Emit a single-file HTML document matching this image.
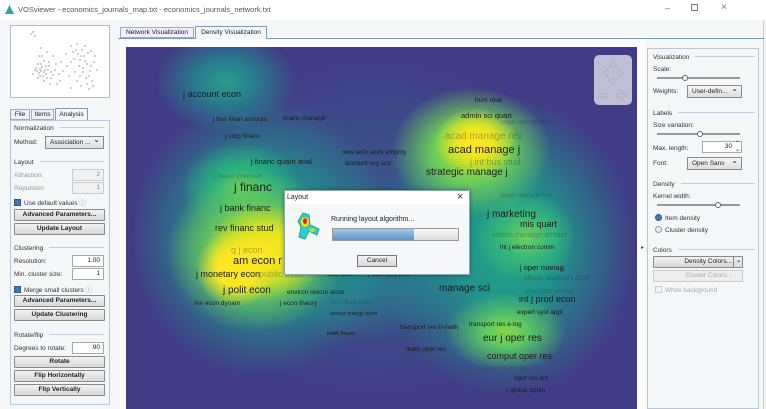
<!DOCTYPE html>
<html><head><meta charset="utf-8">
<style>
*{box-sizing:border-box;margin:0;padding:0}
body{width:766px;height:409px;overflow:hidden;background:#f4f6f8;font-family:"Liberation Sans",sans-serif;font-size:7px;color:#222;position:relative}
.a{position:absolute;white-space:nowrap}
.titlebar{position:absolute;left:0;top:0;width:766px;height:20px;background:#fff}
.box{position:absolute;border:1px solid #b9c9d8;background:#f4f6f8}
.btn{position:absolute;height:12px;border:1px solid #8a8a8a;background:linear-gradient(#f2f2f2,#d8d8d8);font-size:6.5px;text-align:center;line-height:10px;font-weight:bold;color:#222;border-radius:1px}
.inp{position:absolute;height:12px;border:1px solid #a9a9a9;background:#fff;font-size:6.5px;text-align:right;padding-right:3px;line-height:10px}
.inp.dis{background:#f0f0f0;color:#888;border-color:#ccc}
.sec{position:absolute;font-size:6.5px;color:#333;overflow:hidden;white-space:nowrap}
.sec:after{content:"";display:inline-block;margin-left:6px;vertical-align:2px;height:1px;background:#ccd;width:100px}
.lbl{position:absolute;font-size:6.5px;color:#333;white-space:nowrap}
.chk{display:inline-block;width:7px;height:7px;background:#3d7ab8;border:1px solid #2a5a8a;vertical-align:-1px;margin-right:3px}
.combo{position:absolute;height:13px;border:1px solid #8a8a8a;background:linear-gradient(#f5f5f5,#dedede);font-size:6.5px;line-height:11px;padding-left:4px}
.combo:after{content:"\2304";position:absolute;right:3px;top:-3px;font-size:8px}
.slider{position:absolute;height:2px;background:#bbb;border:1px solid #999}
.knob{position:absolute;width:6px;height:6px;border-radius:50%;border:1px solid #666;background:#fff;top:-3px}
#map{position:absolute;left:126px;top:47px;width:511px;height:362px;
background:
radial-gradient(ellipse 40px 38px at 110px 222px,#fde725 0%,#fde725 45%,rgba(253,231,37,0) 100%),
radial-gradient(ellipse 60px 48px at 140px 205px,#fde725 0%,#e8e41b 40%,rgba(200,224,32,0) 100%),
radial-gradient(ellipse 42px 34px at 350px 95px,#fde725 0%,#f0e51f 40%,rgba(220,225,35,0) 100%),
radial-gradient(ellipse 90px 80px at 130px 205px,#a5db36 0%,#7ad151 40%,rgba(94,201,98,0) 100%),
radial-gradient(ellipse 80px 65px at 345px 105px,#b5de2b 0%,#6ece58 45%,rgba(94,201,98,0) 100%),
radial-gradient(ellipse 60px 40px at 380px 285px,#86d549 0%,#5ec962 35%,rgba(60,187,117,0) 100%),
radial-gradient(ellipse 50px 45px at 400px 190px,#6ece58 0%,#35b779 50%,rgba(40,174,128,0) 100%),
radial-gradient(ellipse 60px 45px at 115px 140px,#5ec962 0%,#2ab07f 45%,rgba(33,145,140,0) 100%),
radial-gradient(ellipse 130px 140px at 135px 190px,#22a884 0%,#21918c 40%,rgba(44,114,142,0) 100%),
radial-gradient(ellipse 130px 150px at 380px 200px,#22a884 0%,#21918c 40%,rgba(44,114,142,0) 100%),
radial-gradient(ellipse 70px 50px at 100px 35px,#2a9d8a 0%,#277f8e 40%,rgba(49,104,142,0) 100%),
radial-gradient(ellipse 100px 60px at 230px 235px,#27838e 0%,rgba(49,104,142,0) 100%),
radial-gradient(ellipse 200px 170px at 250px 180px,#355f8d 0%,rgba(65,61,135,0) 100%),
#413c86;}
.t{position:absolute;white-space:nowrap;color:#1d1d1d;line-height:1}
.f{color:rgba(40,40,40,.35)}
</style></head><body>
<div class="titlebar">
 <div class="a" style="left:5px;top:5px;width:9px;height:9px;background:linear-gradient(135deg,#4caf50,#2196f3);clip-path:polygon(50% 0,100% 100%,0 100%)"></div>
 <div class="a" style="left:18px;top:5px;font-size:7.5px;color:#555">VOSviewer - economics_journals_map.txt - economics_journals_network.txt</div>
 <div class="a" style="left:665px;top:3px;font-size:9px;color:#666">&#8211;</div>
 <div class="a" style="left:691px;top:4px;width:7px;height:7px;border:1px solid #777"></div>
 <div class="a" style="left:721px;top:2px;font-size:10px;color:#777">&#215;</div>
</div>
<div class="a" style="left:763px;top:20px;width:1px;height:389px;background:#ccc"></div>

<!-- left -->
<div class="box" style="left:10px;top:25px;width:100px;height:73px;background:#fff;border-color:#a9bfd6">
<svg width="98" height="71" style="position:absolute;left:0;top:0">
<g fill="#555">
<circle cx="20" cy="8" r=".6"/><circle cx="24" cy="10" r=".6"/><circle cx="22" cy="6" r=".6"/><circle cx="30" cy="22" r=".6"/><circle cx="28" cy="30" r=".6"/><circle cx="33" cy="35" r=".6"/><circle cx="25" cy="42" r=".6"/><circle cx="30" cy="45" r=".6"/><circle cx="35" cy="48" r=".6"/><circle cx="38" cy="40" r=".6"/><circle cx="40" cy="52" r=".6"/><circle cx="22" cy="48" r=".6"/><circle cx="44" cy="44" r=".6"/><circle cx="33" cy="55" r=".6"/><circle cx="27" cy="38" r=".6"/><circle cx="42" cy="30" r=".6"/><circle cx="36" cy="26" r=".6"/><circle cx="46" cy="58" r=".6"/><circle cx="50" cy="36" r=".6"/><circle cx="60" cy="20" r=".6"/><circle cx="65" cy="24" r=".6"/><circle cx="70" cy="30" r=".6"/><circle cx="74" cy="20" r=".6"/><circle cx="68" cy="40" r=".6"/><circle cx="72" cy="46" r=".6"/><circle cx="78" cy="50" r=".6"/><circle cx="80" cy="40" r=".6"/><circle cx="84" cy="30" r=".6"/><circle cx="76" cy="58" r=".6"/><circle cx="82" cy="60" r=".6"/><circle cx="66" cy="55" r=".6"/><circle cx="58" cy="50" r=".6"/><circle cx="74" cy="35" r=".6"/><circle cx="63" cy="33" r=".6"/><circle cx="55" cy="28" r=".6"/><circle cx="86" cy="44" r=".6"/><circle cx="31" cy="30" r=".6"/><circle cx="37" cy="44" r=".6"/><circle cx="29" cy="50" r=".6"/><circle cx="77" cy="27" r=".6"/><circle cx="69" cy="50" r=".6"/>
<circle cx="26" cy="45" r=".6"/><circle cx="31" cy="41" r=".6"/><circle cx="34" cy="44" r=".6"/><circle cx="28" cy="47" r=".6"/><circle cx="32" cy="50" r=".6"/><circle cx="36" cy="52" r=".6"/><circle cx="24" cy="44" r=".6"/><circle cx="38" cy="36" r=".6"/><circle cx="40" cy="46" r=".6"/><circle cx="30" cy="38" r=".6"/><circle cx="27" cy="52" r=".6"/><circle cx="35" cy="40" r=".6"/><circle cx="33" cy="46" r=".6"/><circle cx="29" cy="43" r=".6"/><circle cx="42" cy="49" r=".6"/><circle cx="45" cy="38" r=".6"/><circle cx="48" cy="48" r=".6"/><circle cx="52" cy="45" r=".6"/><circle cx="56" cy="40" r=".6"/><circle cx="62" cy="26" r=".6"/><circle cx="67" cy="28" r=".6"/><circle cx="71" cy="24" r=".6"/><circle cx="73" cy="30" r=".6"/><circle cx="69" cy="34" r=".6"/><circle cx="76" cy="38" r=".6"/><circle cx="72" cy="42" r=".6"/><circle cx="79" cy="45" r=".6"/><circle cx="75" cy="52" r=".6"/><circle cx="81" cy="55" r=".6"/><circle cx="78" cy="63" r=".6"/><circle cx="70" cy="60" r=".6"/><circle cx="64" cy="46" r=".6"/><circle cx="60" cy="36" r=".6"/><circle cx="66" cy="18" r=".6"/><circle cx="80" cy="25" r=".6"/><circle cx="83" cy="36" r=".6"/><circle cx="49" cy="55" r=".6"/><circle cx="39" cy="58" r=".6"/><circle cx="60" cy="62" r=".6"/>
</g></svg></div>
<div class="a" style="left:10px;top:109px;width:20px;height:11px;border:1px solid #aaa;font-size:6.5px;text-align:center;line-height:9px;background:#eef">File</div>
<div class="a" style="left:31px;top:109px;width:23px;height:11px;border:1px solid #aaa;font-size:6.5px;text-align:center;line-height:9px;background:#eef">Items</div>
<div class="a" style="left:55px;top:108px;width:33px;height:13px;border:1px solid #7a9cc0;border-bottom:none;font-size:6.5px;text-align:center;line-height:11px;background:#f4f6f8">Analysis</div>
<div class="box" style="left:10px;top:120px;width:100px;height:285px"></div>
<div class="sec" style="left:14px;top:125px;width:90px">Normalization</div>
<div class="lbl" style="left:14px;top:139px">Method:</div>
<div class="combo" style="left:45px;top:136px;width:59px">Association ...</div>
<div class="sec" style="left:14px;top:159px;width:90px">Layout</div>
<div class="lbl" style="left:14px;top:172px;color:#999">Attraction:</div>
<div class="inp dis" style="left:72px;top:169px;width:32px">2</div>
<div class="lbl" style="left:14px;top:185px;color:#999">Repulsion:</div>
<div class="inp dis" style="left:72px;top:182px;width:32px">1</div>
<div class="lbl" style="left:14px;top:197px"><span class="chk"></span>Use default values <span style="color:#999">&#9432;</span></div>
<div class="btn" style="left:14px;top:209px;width:91px">Advanced Parameters...</div>
<div class="btn" style="left:14px;top:223px;width:91px">Update Layout</div>
<div class="sec" style="left:14px;top:245px;width:90px">Clustering</div>
<div class="lbl" style="left:14px;top:258px">Resolution:</div>
<div class="inp" style="left:72px;top:255px;width:32px">1.00</div>
<div class="lbl" style="left:14px;top:271px">Min. cluster size:</div>
<div class="inp" style="left:72px;top:268px;width:32px">1</div>
<div class="lbl" style="left:14px;top:284px"><span class="chk"></span>Merge small clusters <span style="color:#999">&#9432;</span></div>
<div class="btn" style="left:14px;top:295px;width:91px">Advanced Parameters...</div>
<div class="btn" style="left:14px;top:309px;width:91px">Update Clustering</div>
<div class="sec" style="left:14px;top:332px;width:90px">Rotate/flip</div>
<div class="lbl" style="left:14px;top:345px">Degrees to rotate:</div>
<div class="inp" style="left:72px;top:342px;width:32px">90</div>
<div class="btn" style="left:14px;top:356px;width:91px">Rotate</div>
<div class="btn" style="left:14px;top:370px;width:91px">Flip Horizontally</div>
<div class="btn" style="left:14px;top:384px;width:91px">Flip Vertically</div>

<!-- center tabs -->
<div class="a" style="left:118px;top:38px;width:646px;height:1px;background:#7a9cc0"></div>
<div class="a" style="left:120px;top:27px;width:74px;height:11px;border:1px solid #aaa;font-size:6.5px;line-height:9px;text-align:center;background:#eef">Network Visualization</div>
<div class="a" style="left:195px;top:26px;width:72px;height:13px;border:1px solid #7a9cc0;border-bottom:none;font-size:6.5px;line-height:11px;text-align:center;background:#f4f6f8">Density Visualization</div>
<div class="a" style="left:120px;top:39px;width:525px;height:370px;background:#fff"></div>

<div id="map">
 <svg class="a" style="left:468px;top:8px" width="38" height="50">
  <rect x="0" y="0" width="38" height="50" rx="5" fill="rgba(222,222,232,.8)"/>
  <g fill="none" stroke="#b0b0b8" stroke-width="0.8">
   <path d="M19 6 L23 12 L15 12 Z"/>
   <path d="M8 18 L14 14 L14 22 Z"/>
   <path d="M30 18 L24 14 L24 22 Z"/>
   <path d="M19 30 L23 24 L15 24 Z"/>
   <rect x="6" y="39" width="8" height="3"/>
   <path d="M26 36 h3 v3 h3 v3 h-3 v3 h-3 v-3 h-3 v-3 h3 z"/>
  </g>
 </svg>
</div>
<div id="labels">
<div class="t" style="left:183px;top:90px;font-size:9px">j account econ</div>
<div class="t" style="left:475px;top:98px;font-size:6.5px">hum relat</div>
<div class="t" style="left:461px;top:112px;font-size:7.5px">admin sci quart</div>
<div class="t f" style="left:500px;top:120px;font-size:6.5px">organ res methods</div>
<div class="t" style="left:213px;top:117px;font-size:6.5px">j bus finan account</div>
<div class="t" style="left:283px;top:116px;font-size:6.5px">financ manage</div>
<div class="t" style="left:225px;top:134px;font-size:6.5px">j corp financ</div>
<div class="t f" style="left:445px;top:132px;font-size:10px">acad manage rev</div>
<div class="t" style="left:448px;top:145px;font-size:11px">acad manage j</div>
<div class="t" style="left:342px;top:150px;font-size:6.5px">new tech work employ</div>
<div class="t" style="left:345px;top:161px;font-size:6.5px">account org soc</div>
<div class="t" style="left:251px;top:158px;font-size:7.5px">j financ quant anal</div>
<div class="t f" style="left:470px;top:158px;font-size:9px">j int bus stud</div>
<div class="t" style="left:426px;top:168px;font-size:10px">strategic manage j</div>
<div class="t f" style="left:214px;top:174px;font-size:6.5px">j financ intermed</div>
<div class="t" style="left:234px;top:181px;font-size:12px">j financ</div>
<div class="t" style="left:220px;top:204px;font-size:9px">j bank financ</div>
<div class="t" style="left:215px;top:224px;font-size:9px">rev financ stud</div>
<div class="t f" style="left:500px;top:193px;font-size:6.5px">sloan manage rev</div>
<div class="t" style="left:487px;top:210px;font-size:10px">j marketing</div>
<div class="t" style="left:520px;top:220px;font-size:9px">mis quart</div>
<div class="t f" style="left:492px;top:231px;font-size:7.5px">inform manage-amster</div>
<div class="t" style="left:500px;top:245px;font-size:6.5px">int j electron comm</div>
<div class="t f" style="left:231px;top:246px;font-size:9px">q j econ</div>
<div class="t" style="left:233px;top:256px;font-size:11px">am econ r</div>
<div class="t" style="left:196px;top:270px;font-size:9px">j monetary econ</div>
<div class="t f" style="left:259px;top:270px;font-size:9px">public econ</div>
<div class="t" style="left:520px;top:264px;font-size:7.5px">j oper manag</div>
<div class="t f" style="left:525px;top:274px;font-size:8px">decis support syst</div>
<div class="t" style="left:327px;top:272px;font-size:6.5px">ecol econ</div>
<div class="t" style="left:368px;top:272px;font-size:6.5px">j econ psychol</div>
<div class="t" style="left:223px;top:286px;font-size:10px">j polit econ</div>
<div class="t" style="left:439px;top:284px;font-size:10px">manage sci</div>
<div class="t f" style="left:525px;top:289px;font-size:6.5px">prod plan control</div>
<div class="t" style="left:519px;top:295px;font-size:9px">int j prod econ</div>
<div class="t" style="left:287px;top:290px;font-size:6.5px">environ resour econ</div>
<div class="t" style="left:194px;top:301px;font-size:6.5px">rev econ dynam</div>
<div class="t" style="left:280px;top:301px;font-size:6.5px">j econ theory</div>
<div class="t f" style="left:330px;top:300px;font-size:6.5px">sci urban econ</div>
<div class="t" style="left:330px;top:312px;font-size:5.5px">resour energy econ</div>
<div class="t" style="left:517px;top:310px;font-size:6.5px">expert syst appl</div>
<div class="t" style="left:400px;top:325px;font-size:6.5px">transport res b-meth</div>
<div class="t" style="left:469px;top:322px;font-size:6.5px">transport res e-log</div>
<div class="t" style="left:327px;top:332px;font-size:5.5px">math financ</div>
<div class="t" style="left:483px;top:334px;font-size:10px">eur j oper res</div>
<div class="t" style="left:406px;top:347px;font-size:6.5px">math oper res</div>
<div class="t" style="left:487px;top:352px;font-size:9px">comput oper res</div>
<div class="t f" style="left:485px;top:364px;font-size:7.5px">ann oper res</div>
<div class="t" style="left:514px;top:376px;font-size:6.5px">oper res lett</div>
<div class="t" style="left:507px;top:388px;font-size:6.5px">j global optim</div>
</div>

<!-- dialog -->
<div class="a" style="left:284px;top:190px;width:186px;height:85px;background:#fff;border:1px solid #8aa;box-shadow:0 0 4px rgba(0,0,0,.4)">
 <div class="a" style="left:2px;top:3px;font-size:7px;color:#222">Layout</div>
 <div class="a" style="left:172px;top:0px;font-size:11px;color:#333">&#215;</div>
 <div class="a" style="left:0;top:13px;width:184px;height:70px;background:#f6f7f8"></div>
 <svg class="a" style="left:8px;top:20px" width="28" height="30"><path d="M10 2 L16 4 L17 14 L26 18 L24 24 L16 20 L12 28 L6 26 L8 16 L5 10 Z" fill="#3cc" stroke="#2a8" stroke-width="1"/><ellipse cx="12" cy="11" rx="4" ry="5" fill="#fd0"/><ellipse cx="12" cy="10" rx="2" ry="3" fill="#d22"/><ellipse cx="19" cy="19" rx="3" ry="2" fill="#bd4"/></svg>
 <div class="a" style="left:46px;top:25px;font-size:7px">Running layout algorithm...</div>
 <div class="a" style="left:47px;top:37px;width:127px;height:13px;border:1px solid #999;background:linear-gradient(#f8f8f8,#ddd)"></div>
 <div class="a" style="left:48px;top:38px;width:81px;height:11px;background:linear-gradient(#a6c8e8,#5b96c8)"></div>
 <div class="a" style="left:72px;top:64px;width:40px;height:12px;border:1px solid #777;background:linear-gradient(#f2f2f2,#d6d6d6);font-size:6.5px;text-align:center;line-height:10px">Cancel</div>
</div>

<!-- right -->
<div class="box" style="left:647px;top:48px;width:112px;height:361px"></div>
<div class="sec" style="left:653px;top:54px;width:102px">Visualization</div>
<div class="lbl" style="left:653px;top:66px">Scale:</div>
<div class="slider" style="left:657px;top:77px;width:83px"><div class="knob" style="left:24px"></div></div>
<div class="lbl" style="left:653px;top:88px">Weights:</div>
<div class="combo" style="left:687px;top:85px;width:55px">User-defin...</div>
<div class="sec" style="left:653px;top:110px;width:102px">Labels</div>
<div class="lbl" style="left:653px;top:122px">Size variation:</div>
<div class="slider" style="left:657px;top:133px;width:83px"><div class="knob" style="left:39px"></div></div>
<div class="lbl" style="left:653px;top:145px">Max. length:</div>
<div class="inp" style="left:702px;top:141px;width:40px;padding-right:9px">30</div>
<div class="a" style="left:735px;top:141px;font-size:6px;line-height:6px">&#8963;<br>&#8964;</div>
<div class="lbl" style="left:653px;top:160px">Font:</div>
<div class="combo" style="left:687px;top:157px;width:55px">Open Sans</div>
<div class="sec" style="left:653px;top:181px;width:102px">Density</div>
<div class="lbl" style="left:653px;top:193px">Kernel width:</div>
<div class="slider" style="left:657px;top:204px;width:83px"><div class="knob" style="left:57px"></div></div>
<div class="lbl" style="left:655px;top:214px"><span class="chk" style="border-radius:50%"></span>Item density</div>
<div class="lbl" style="left:655px;top:226px"><span class="chk" style="border-radius:50%;background:#eee;border-color:#999"></span>Cluster density</div>
<div class="a" style="left:641px;top:244px;font-size:6px;color:#444">&#9656;</div>
<div class="sec" style="left:653px;top:247px;width:102px">Colors</div>
<div class="btn" style="left:653px;top:256px;width:90px;font-weight:normal;padding-right:10px;text-align:right">Density Colors...</div>
<div class="a" style="left:733px;top:256px;width:10px;height:12px;border-left:1px solid #888;font-size:7px;text-align:center;line-height:10px">&#8964;</div>
<div class="btn" style="left:653px;top:270px;width:90px;font-weight:normal;color:#aaa;border-color:#ccc;background:#eee;padding-right:10px;text-align:right">Cluster Colors...</div>
<div class="lbl" style="left:655px;top:286px;color:#aaa"><span class="chk" style="background:#f4f4f4;border-color:#ccc"></span>White background</div>
</body></html>
